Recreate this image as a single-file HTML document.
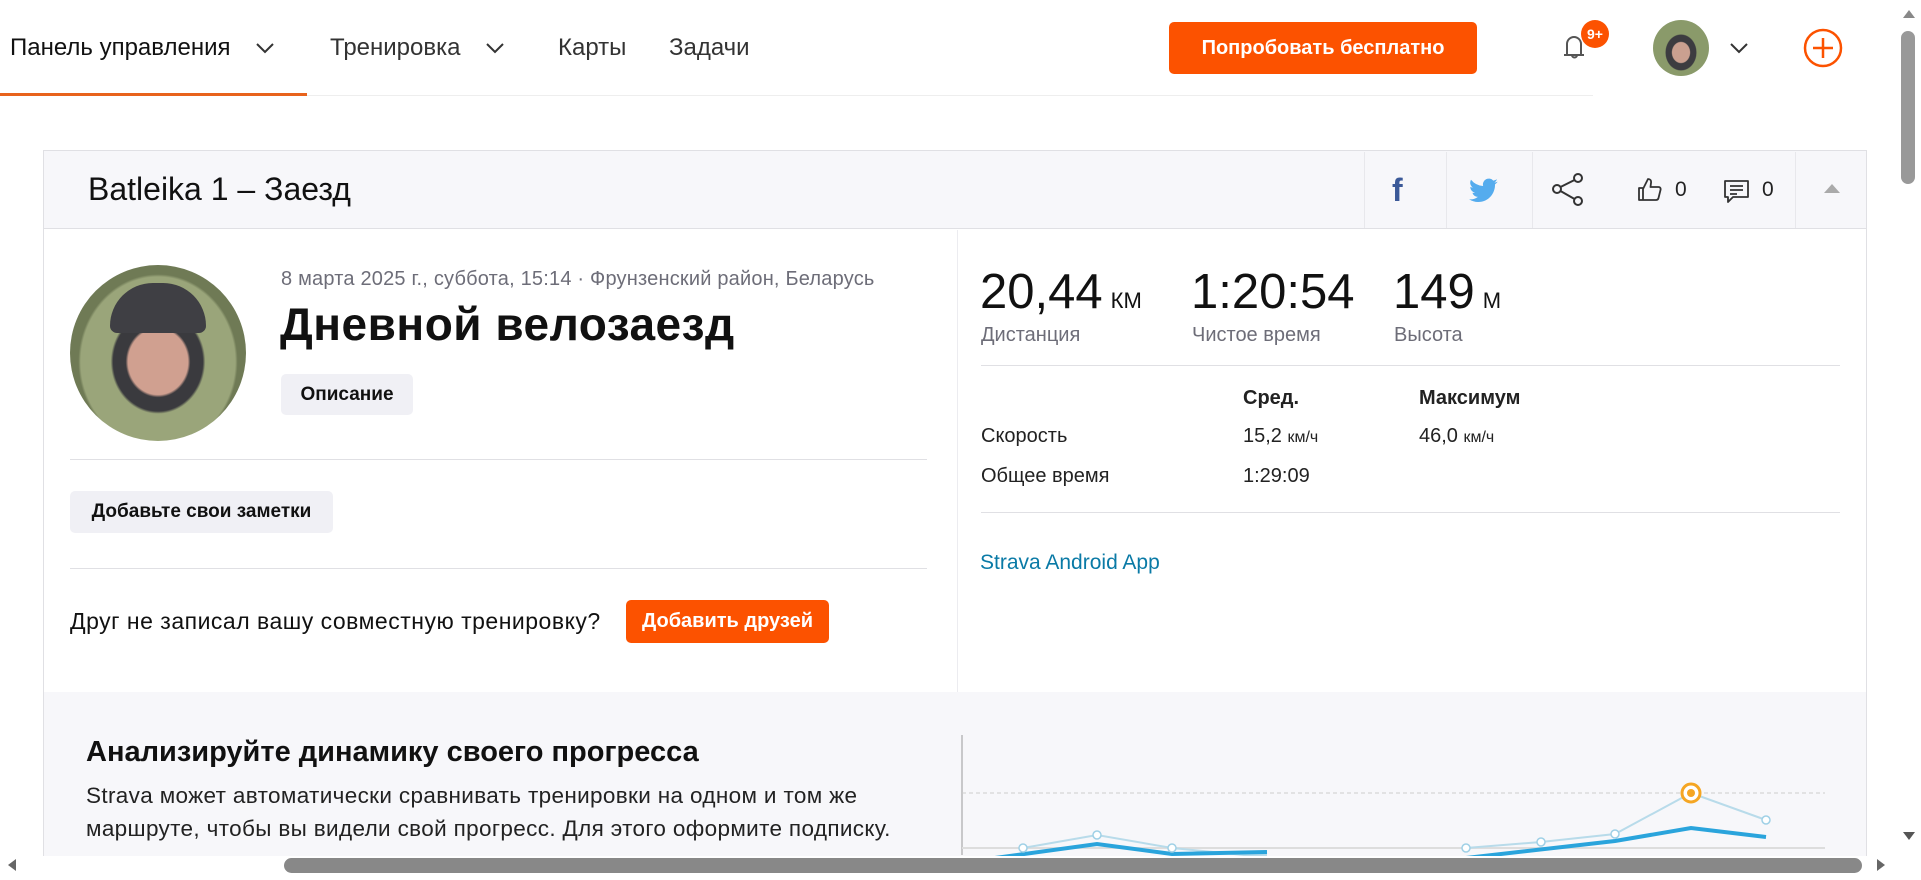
<!DOCTYPE html>
<html><head><meta charset="utf-8"><style>
*{box-sizing:border-box;margin:0;padding:0}
body{width:1921px;height:880px;overflow:hidden;background:#fff;font-family:"Liberation Sans","DejaVu Sans",sans-serif;color:#242428;position:relative}
.a{position:absolute;white-space:nowrap}
.nav{font-size:24px;color:#333;top:34px}
.hr{position:absolute;height:1px;background:#e0e0e4}
.btn{position:absolute;background:#f0f0f5;border-radius:5px;font-size:19px;font-weight:bold;display:flex;align-items:center;justify-content:center;color:#111}
.big{font-size:49px;color:#111}
.big small{font-size:22px;margin-left:8px}
.lab{font-size:20px;color:#6d6d78}
.row{font-size:20px;color:#222}
</style></head><body>
<div class="a nav" style="left:10px;color:#111;font-weight:500">Панель управления</div>
<svg class="a" style="left:255px;top:42px" width="20" height="12"><path d="M2 2l8 8 8-8" stroke="#333" stroke-width="2" fill="none"/></svg>
<div class="a nav" style="left:330px">Тренировка</div>
<svg class="a" style="left:485px;top:42px" width="20" height="12"><path d="M2 2l8 8 8-8" stroke="#333" stroke-width="2" fill="none"/></svg>
<div class="a nav" style="left:558px">Карты</div>
<div class="a nav" style="left:669px">Задачи</div>
<div class="a" style="left:0;top:93px;width:307px;height:3px;background:#e8631c"></div>
<div class="a" style="left:307px;top:95px;width:1286px;height:1px;background:#eee"></div>
<div class="a" style="left:1169px;top:22px;width:308px;height:52px;background:#fc5200;border-radius:5px;color:#fff;font-weight:bold;font-size:20px;display:flex;align-items:center;justify-content:center">Попробовать бесплатно</div>
<svg class="a" style="left:1555px;top:28px" width="40" height="36"><path d="M9 27h20M12 27V16a7 7 0 0 1 14 0v11M17 27a2.5 2.5 0 0 0 5 0" stroke="#555" stroke-width="2" fill="none"/></svg>
<div class="a" style="left:1581px;top:20px;width:28px;height:28px;border-radius:50%;background:#fc5200;color:#fff;font-size:14px;font-weight:bold;display:flex;align-items:center;justify-content:center">9+</div>
<div class="a" style="left:1653px;top:20px;width:56px;height:56px;border-radius:50%;background:radial-gradient(ellipse at 50% 58%,#caa090 0 22%,#3c3c40 24% 38%,#8a9a6a 40% 75%,#7a3a3a 100%)"></div>
<svg class="a" style="left:1729px;top:42px" width="20" height="12"><path d="M2 2l8 8 8-8" stroke="#333" stroke-width="2" fill="none"/></svg>
<svg class="a" style="left:1802px;top:27px" width="42" height="42"><circle cx="21" cy="21" r="18" stroke="#fc5200" stroke-width="2.5" fill="none"/><path d="M21 11v20M11 21h20" stroke="#fc5200" stroke-width="2.5"/></svg>
<div class="a" style="left:1903px;top:10px;width:0;height:0;border:6px solid transparent;border-bottom:8px solid #888;border-top:0"></div>
<div class="a" style="left:1901px;top:31px;width:14px;height:153px;border-radius:7px;background:#999"></div>
<div class="a" style="left:1903px;top:832px;border:6px solid transparent;border-top:8px solid #555;border-bottom:0"></div>
<div class="a" style="left:43px;top:150px;width:1824px;height:730px;border:1px solid #e0e0e4;border-bottom:0"></div>
<div class="a" style="left:44px;top:151px;width:1822px;height:78px;background:#f7f7fa;border-bottom:1px solid #e0e0e4"></div>
<div class="a" style="left:88px;top:171px;font-size:32px;color:#111">Batleika 1 – Заезд</div>
<div class="a" style="left:1364px;top:152px;width:1px;height:76px;background:#e8e8ec"></div>
<div class="a" style="left:1446px;top:152px;width:1px;height:76px;background:#e8e8ec"></div>
<div class="a" style="left:1532px;top:152px;width:1px;height:76px;background:#e8e8ec"></div>
<div class="a" style="left:1795px;top:152px;width:1px;height:76px;background:#e8e8ec"></div>
<div class="a" style="left:1392px;top:172px;font-size:32px;font-weight:bold;color:#3b5998">f</div>
<svg class="a" style="left:1469px;top:178px" width="30" height="26" viewBox="0 0 24 20"><path d="M23 2.5a9 9 0 0 1-2.7.8A4.7 4.7 0 0 0 22.4.6a9.400 9.400 0 0 1-3 1.1A4.700 4.700 0 0 0 11.3 6 13.4 13.4 0 0 1 1.600 1a4.700 4.700 0 0 0 1.500 6.300A4.700 4.700 0 0 1 1 6.700a4.700 4.700 0 0 0 3.800 4.600 4.700 4.700 0 0 1-2.100.1 4.700 4.700 0 0 0 4.400 3.300A9.500 9.500 0 0 1 0 16.600 13.400 13.400 0 0 0 7.300 18.800c8.700 0 13.500-7.300 13.500-13.500v-.6A9.600 9.600 0 0 0 23 2.500z" fill="#55acee"/></svg>
<svg class="a" style="left:1549px;top:171px" width="38" height="38"><circle cx="8" cy="18" r="4" stroke="#333" stroke-width="2" fill="none"/><circle cx="29" cy="7" r="4" stroke="#333" stroke-width="2" fill="none"/><circle cx="29" cy="30" r="4" stroke="#333" stroke-width="2" fill="none"/><path d="M11.5 16L25.5 9M11.5 20l14 8" stroke="#333" stroke-width="2"/></svg>
<svg class="a" style="left:1636px;top:174px" width="30" height="30"><path d="M3 14h4v12H3zM7 15l5-10c2 0 3.500 1.200 3 4L14.500 13h8c1.500 0 2.500 1.200 2 3l-2 8c-.3 1.300-1.300 2-2.500 2H7" stroke="#333" stroke-width="1.8" fill="none" stroke-linejoin="round"/></svg>
<div class="a" style="left:1675px;top:178px;font-size:21px;color:#222">0</div>
<svg class="a" style="left:1722px;top:178px" width="30" height="30"><path d="M3 3h23v16H11l-5 5v-5H3z" stroke="#333" stroke-width="1.8" fill="none" stroke-linejoin="round"/><path d="M8 8h13M8 12h13M8 16h7" stroke="#333" stroke-width="1.8"/></svg>
<div class="a" style="left:1762px;top:178px;font-size:21px;color:#222">0</div>
<div class="a" style="left:1824px;top:184px;border:8px solid transparent;border-bottom:9px solid #aaa;border-top:0"></div>
<div class="a" style="left:957px;top:230px;width:1px;height:462px;background:#ececf0"></div>
<div class="a" style="left:70px;top:265px;width:176px;height:176px;border-radius:50%;background:radial-gradient(ellipse at 50% 55%,#d0a090 0 24%,#3a3a3e 26% 36%,#9aa57a 38% 62%,#6f7a55 64% 80%,#8b2c3a 82%)"></div>
<div class="a" style="left:110px;top:283px;width:96px;height:50px;border-radius:48px 48px 8px 8px;background:#3f3f44"></div>
<div class="a" style="left:281px;top:268px;font-size:20px;color:#6d6d78;letter-spacing:0.2px">8 марта 2025 г., суббота, 15:14 · Фрунзенский район, Беларусь</div>
<div class="a" style="left:280px;top:297px;font-size:46px;font-weight:bold;color:#111;letter-spacing:0.5px">Дневной велозаезд</div>
<div class="btn" style="left:281px;top:374px;width:132px;height:41px">Описание</div>
<div class="hr" style="left:70px;top:459px;width:857px"></div>
<div class="btn" style="left:70px;top:491px;width:263px;height:42px">Добавьте свои заметки</div>
<div class="hr" style="left:70px;top:568px;width:857px"></div>
<div class="a" style="left:70px;top:608px;font-size:23px;color:#111;letter-spacing:0.5px">Друг не записал вашу совместную тренировку?</div>
<div class="a" style="left:626px;top:600px;width:203px;height:43px;background:#fc5200;border-radius:5px;color:#fff;font-weight:bold;font-size:20px;display:flex;align-items:center;justify-content:center">Добавить друзей</div>
<div class="a big" style="left:980px;top:264px">20,44<small>КМ</small></div>
<div class="a big" style="left:1191px;top:264px">1:20:54</div>
<div class="a big" style="left:1393px;top:264px">149<small>М</small></div>
<div class="a lab" style="left:981px;top:324px">Дистанция</div>
<div class="a lab" style="left:1192px;top:324px">Чистое время</div>
<div class="a lab" style="left:1394px;top:324px">Высота</div>
<div class="hr" style="left:981px;top:365px;width:859px"></div>
<div class="a row" style="left:1243px;top:387px;font-weight:bold">Сред.</div>
<div class="a row" style="left:1419px;top:387px;font-weight:bold">Максимум</div>
<div class="a row" style="left:981px;top:425px">Скорость</div>
<div class="a row" style="left:1243px;top:425px">15,2 <span style="font-size:16px">км/ч</span></div>
<div class="a row" style="left:1419px;top:425px">46,0 <span style="font-size:16px">км/ч</span></div>
<div class="a row" style="left:981px;top:465px">Общее время</div>
<div class="a row" style="left:1243px;top:465px">1:29:09</div>
<div class="hr" style="left:981px;top:512px;width:859px"></div>
<div class="a" style="left:980px;top:551px;font-size:21px;color:#0a7aa6">Strava Android App</div>
<div class="a" style="left:44px;top:692px;width:1822px;height:188px;background:#f7f7fa"></div>
<div class="a" style="left:86px;top:736px;font-size:29px;font-weight:bold;color:#111">Анализируйте динамику своего прогресса</div>
<div class="a" style="left:86px;top:779px;font-size:22.5px;line-height:33px;color:#222;letter-spacing:0.35px">Strava может автоматически сравнивать тренировки на одном и том же<br>маршруте, чтобы вы видели свой прогресс. Для этого оформите подписку.</div>
<svg class="a" style="left:955px;top:730px" width="880" height="130">
<path d="M7 5v120" stroke="#999" stroke-width="1"/>
<path d="M7 63H870" stroke="#ccc" stroke-dasharray="4 3"/>
<path d="M7 118H870" stroke="#ddd" stroke-width="2"/>
<path d="M68 118L142 105L217 118L289 125L312 125M511 118L586 112L660 104L736 63L811 90" stroke="#b8dbea" stroke-width="2" fill="none"/>
<path d="M40 128L142 114L217 124L312 122M511 128L660 111L736 98L811 107" stroke="#2aa4dc" stroke-width="4" fill="none"/>
<g fill="#fff" stroke="#9fd0e6" stroke-width="1.5"><circle cx="68" cy="118" r="4"/><circle cx="142" cy="105" r="4"/><circle cx="217" cy="118" r="4"/><circle cx="511" cy="118" r="4"/><circle cx="586" cy="112" r="4"/><circle cx="660" cy="104" r="4"/><circle cx="811" cy="90" r="4"/></g>
<circle cx="736" cy="63" r="9" fill="#fff" stroke="#f5a623" stroke-width="3"/><circle cx="736" cy="63" r="4" fill="#f5a623"/>
</svg>
<div class="a" style="left:0;top:856px;width:1901px;height:24px;background:#fff"></div>
<div class="a" style="left:8px;top:859px;border:6px solid transparent;border-right:8px solid #666;border-left:0"></div>
<div class="a" style="left:284px;top:858px;width:1578px;height:15px;border-radius:8px;background:#888"></div>
<div class="a" style="left:1877px;top:859px;border:6px solid transparent;border-left:8px solid #666;border-right:0"></div>
</body></html>
